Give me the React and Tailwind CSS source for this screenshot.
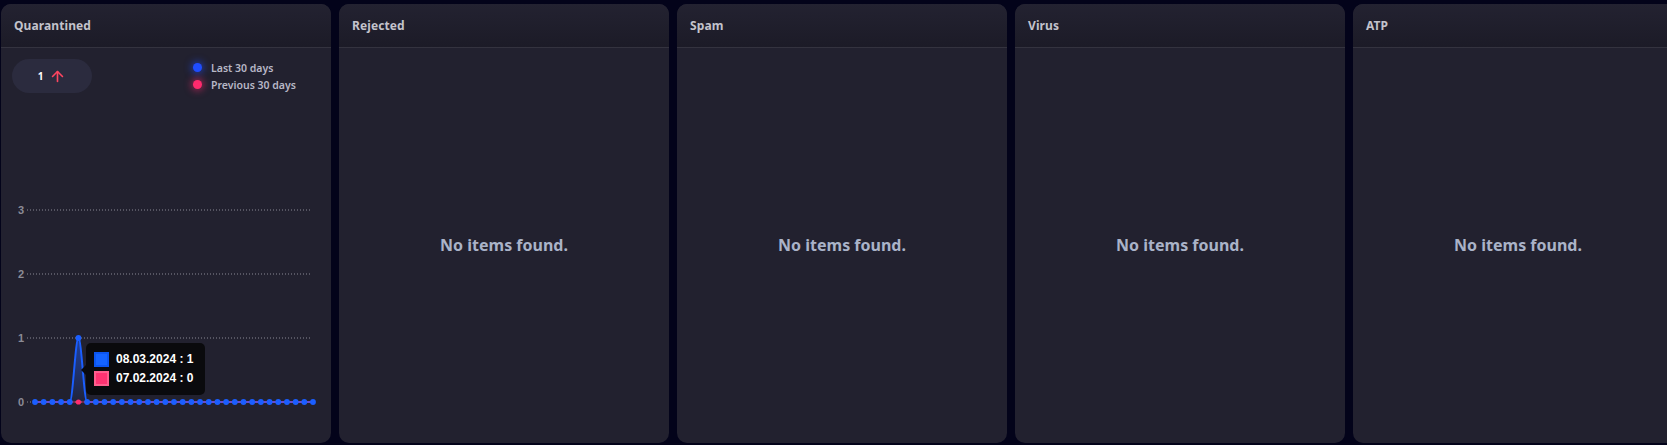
import React from "react";
import { ArrowUp } from "lucide-react";

const N = 33;
const X0 = 34;
const X1 = 312;
const STEP = (X1 - X0) / (N - 1);
const Y0 = 301;
const Y1 = 237;
const PEAK = 5;

function xs(i) {
  return X0 + i * STEP;
}

function blueLinePath() {
  let d = `M ${xs(0)} ${Y0}`;
  for (let i = 1; i < N; i++) {
    const px = xs(i - 1);
    const cx = xs(i);
    const py = i - 1 === PEAK ? Y1 : Y0;
    const cy = i === PEAK ? Y1 : Y0;
    if (py === cy) {
      d += ` L ${cx} ${cy}`;
    } else {
      const k = STEP * 0.35;
      d += ` C ${px + k} ${py} ${cx - k} ${cy} ${cx} ${cy}`;
    }
  }
  return d;
}

function Chart() {
  const line = blueLinePath();
  const area = `${line} L ${xs(N - 1)} ${Y0} L ${xs(0)} ${Y0} Z`;
  const grid = [
    { v: "3", y: 109 },
    { v: "2", y: 173 },
    { v: "1", y: 237 },
    { v: "0", y: 301 },
  ];
  return (
    <svg width="330" height="343" viewBox="0 0 330 343" className="block">
      <defs>
        <linearGradient id="blueFill" x1="0" y1="0" x2="0" y2="1">
          <stop offset="0%" stopColor="#1c5cff" stopOpacity="0.55" />
          <stop offset="100%" stopColor="#1c5cff" stopOpacity="0.05" />
        </linearGradient>
      </defs>
      {grid.map((g) => (
        <g key={g.v}>
          <line
            x1="26"
            x2="311"
            y1={g.y}
            y2={g.y}
            stroke="#8a8a96"
            strokeWidth="1"
            strokeDasharray="1 2"
          />
          <text
            x="23"
            y={g.y + 4}
            textAnchor="end"
            fontSize="11"
            fontWeight="700"
            fill="#8b8b96"
            fontFamily="'Liberation Sans', Arial, sans-serif"
          >
            {g.v}
          </text>
        </g>
      ))}
      <path d={area} fill="url(#blueFill)" />
      <path d={line} fill="none" stroke="#1a5eff" strokeWidth="2" />
      <line x1={xs(0)} x2={xs(N - 1)} y1={Y0} y2={Y0} stroke="#ff2d6f" strokeWidth="1.2" opacity="0.7" />
      {Array.from({ length: N }).map((_, i) => (
        <circle
          key={i}
          cx={xs(i)}
          cy={i === PEAK ? Y1 : Y0}
          r="2.9"
          fill="#1a5eff"
        />
      ))}
      <circle cx={xs(PEAK)} cy={Y0} r="2.6" fill="#ff2d6f" />
    </svg>
  );
}

function Header({ title }) {
  return (
    <div className="h-[44px] shrink-0 flex items-center px-[13px] border-b border-[#34333f] bg-gradient-to-b from-[#232231] to-[#1c1b27]">
      <span className="text-[12px] font-bold text-[#c3c3cc] tracking-[0.1px]">{title}</span>
    </div>
  );
}

function QuarantinedCard() {
  return (
    <div className="relative w-[330px] shrink-0 h-[439px] rounded-[10px] bg-[#22212f] overflow-hidden flex flex-col">
      <Header title="Quarantined" />
      <div className="flex items-center pt-[11px] pl-[11px]">
        <div className="w-[80px] h-[34px] rounded-full bg-[#2b2b3e] flex items-center justify-center gap-[6px]">
          <span className="text-[10px] font-bold text-white">1</span>
          <ArrowUp size={17} strokeWidth={2.3} color="#ff4560" />
        </div>
        <div className="ml-[101px] flex flex-col gap-[7px]">
          <div className="flex items-center gap-[9px]">
            <span className="w-[9px] h-[9px] rounded-full bg-[#1f4dff] shadow-[0_0_7px_2px_rgba(31,77,255,0.5)]" />
            <span className="text-[10.5px] font-semibold text-[#b7b7c6] leading-[10px]">Last 30 days</span>
          </div>
          <div className="flex items-center gap-[9px]">
            <span className="w-[9px] h-[9px] rounded-full bg-[#ff2a6d] shadow-[0_0_7px_2px_rgba(255,42,109,0.5)]" />
            <span className="text-[10.5px] font-semibold text-[#b7b7c6] leading-[10px]">Previous 30 days</span>
          </div>
        </div>
      </div>
      <div className="mt-[8px]">
        <Chart />
      </div>
      <div className="absolute left-[85px] top-[339px] w-[119px] h-[52px] rounded-[5px] bg-[#0a0a0d] flex flex-col justify-center gap-[4px] pl-[8px] font-['Liberation_Sans',Arial,sans-serif]">
        <span className="absolute left-[-5px] top-[22px] w-0 h-0 border-y-[5px] border-y-transparent border-r-[5px] border-r-[#0a0a0d]" />
        <div className="flex items-center gap-[7px]">
          <span className="w-[15px] h-[15px] bg-[#1463ff] border-[2px] border-[#0b55f0]" />
          <span className="text-[12px] font-bold text-white leading-[15px]">08.03.2024 : 1</span>
        </div>
        <div className="flex items-center gap-[7px]">
          <span className="w-[15px] h-[15px] bg-[#ff3372] border-[2px] border-[#ff5f8e]" />
          <span className="text-[12px] font-bold text-white leading-[15px]">07.02.2024 : 0</span>
        </div>
      </div>
    </div>
  );
}

function EmptyCard({ title }) {
  return (
    <div className="w-[330px] shrink-0 h-[439px] rounded-[10px] bg-[#22212f] overflow-hidden flex flex-col">
      <Header title={title} />
      <div className="flex-1 flex items-center justify-center pb-[2px]">
        <span className="text-[16px] font-bold text-[#aab3c8]">No items found.</span>
      </div>
    </div>
  );
}

export default function App() {
  return (
    <div
      className="w-[1667px] h-[445px] bg-[#03031a] overflow-hidden pt-[4px] pl-[1px] flex gap-[8px]"
      style={{ fontFamily: "'Noto Sans', 'Open Sans', sans-serif" }}
    >
      <QuarantinedCard />
      <EmptyCard title="Rejected" />
      <EmptyCard title="Spam" />
      <EmptyCard title="Virus" />
      <EmptyCard title="ATP" />
    </div>
  );
}
